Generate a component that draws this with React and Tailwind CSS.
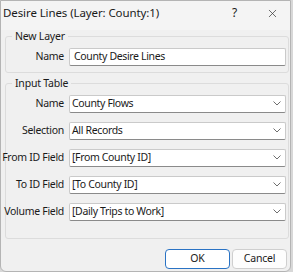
import React from 'react';
import { X } from 'lucide-react';

const font = { fontFamily: '"Noto Sans", "Open Sans", sans-serif' };

const Chevron = () => (
  <svg width="8" height="5" viewBox="0 0 8 5" className="shrink-0">
    <polyline points="0.5,0.5 4,4 7.5,0.5" fill="none" stroke="#6e6e6e" strokeWidth="1" />
  </svg>
);

const TextField = ({ value }) => (
  <div className="flex-1 h-[18px] bg-white border border-[#cacaca] border-b-[#8a8a8a] rounded-[2px] flex items-center px-[4px] text-[10.5px] tracking-[-0.35px] text-[#1a1a1a]">
    {value}
  </div>
);

const Select = ({ value }) => (
  <div className="flex-1 h-[18px] bg-white border border-[#cacaca] border-b-[#8a8a8a] rounded-[2px] flex items-center pl-[2px] pr-[4px] text-[10.5px] tracking-[-0.35px] text-[#1a1a1a]">
    <span className="flex-1">{value}</span>
    <Chevron />
  </div>
);

const Row = ({ label, children }) => (
  <div className="flex items-center">
    <div className="w-[60px] shrink-0 flex justify-end pr-[5px]">
      <span className="shrink-0 whitespace-nowrap text-[10.5px] tracking-[-0.3px] text-[#1a1a1a]">{label}</span>
    </div>
    {children}
  </div>
);

const App = () => {
  return (
    <div className="w-[293px] h-[272px] bg-[#d8d8d8]" style={font}>
      <div className="w-[291px] h-[272px] bg-[#f0f0f0] border border-[#b4b4b4] rounded-b-[6px] flex flex-col">
        {/* Title bar */}
        <div className="h-[29px] flex items-center pl-[2px] pb-[5px] bg-[#f4f4f4]">
          <span className="flex-1 text-[11.5px] tracking-[-0.1px] text-[#1a1a1a]">Desire Lines (Layer: County:1)</span>
          <span className="w-[10px] text-[12px] text-[#1a1a1a] mr-[24px]">?</span>
          <X className="w-[13px] h-[13px] text-[#333] mr-[11px]" strokeWidth={1.3} />
        </div>

        {/* New Layer group */}
        <fieldset className="ml-[4px] mr-[1px] mt-[-1px] border border-[#dcdcdc] rounded-[3px] pl-[3px] pr-[2px] pb-[6px]">
          <legend className="ml-[3px] px-[3px] text-[10.5px] tracking-[-0.2px] text-[#1a1a1a]">New Layer</legend>
          <div className="mt-[3px]">
            <Row label="Name"><TextField value="County Desire Lines" /></Row>
          </div>
        </fieldset>

        {/* Input Table group */}
        <fieldset className="ml-[4px] mr-[1px] mt-[3px] border border-[#dcdcdc] rounded-[3px] pl-[3px] pr-[2px] pb-[17px]">
          <legend className="ml-[3px] px-[3px] text-[10.5px] tracking-[-0.2px] text-[#1a1a1a]">Input Table</legend>
          <div className="flex flex-col gap-[9px] mt-[3px]">
            <Row label="Name"><Select value="County Flows" /></Row>
            <Row label="Selection"><Select value="All Records" /></Row>
            <Row label="From ID Field"><Select value="[From County ID]" /></Row>
            <Row label="To ID Field"><Select value="[To County ID]" /></Row>
            <Row label="Volume Field"><Select value="[Daily Trips to Work]" /></Row>
          </div>
        </fieldset>

        {/* Buttons */}
        <div className="flex justify-end gap-[2px] mt-[10px] pr-[3px]">
          <button className="w-[65px] h-[20px] bg-white border-[1.5px] border-[#2a73c4] rounded-[4px] text-[10.5px] text-[#1a1a1a]">OK</button>
          <button className="w-[55px] h-[20px] bg-[#fdfdfd] border border-[#cfcfcf] rounded-[4px] text-[10.5px] tracking-[-0.2px] text-[#1a1a1a]">Cancel</button>
        </div>
      </div>
    </div>
  );
};

export default App;
